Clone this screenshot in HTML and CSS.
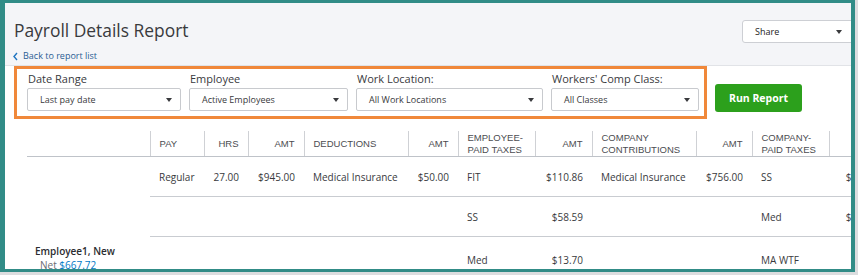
FILE: index.html
```html
<!DOCTYPE html>
<html lang="en">
<head>
<meta charset="utf-8">
<title>Payroll Details Report</title>
<link rel="stylesheet" href="styles.css">
</head>
<body>
<div class="frame">
  <div class="inner">
    <header class="page-head">
      <div class="title-row">
        <h1 class="title">Payroll Details Report</h1>
        <div class="share"><span>Share</span><span class="caret"></span></div>
      </div>
      <a class="back" href="#">
        <svg class="chev" width="5" height="9" viewBox="0 0 5 9"><path d="M4 1 L1 4.5 L4 8" fill="none" stroke="#1f74c0" stroke-width="1.4"/></svg>
        <span>Back to report list</span>
      </a>
    </header>
    <section class="content">
      <div class="filters-row">
        <div class="filters">
          <div class="field w1"><label class="lbl">Date Range</label><div class="select"><span>Last pay date</span><span class="caret"></span></div></div>
          <div class="field w2"><label class="lbl">Employee</label><div class="select"><span>Active Employees</span><span class="caret"></span></div></div>
          <div class="field w3"><label class="lbl">Work Location:</label><div class="select"><span>All Work Locations</span><span class="caret"></span></div></div>
          <div class="field w4"><label class="lbl">Workers' Comp Class:</label><div class="select"><span>All Classes</span><span class="caret"></span></div></div>
        </div>
        <button class="run">Run Report</button>
      </div>
      <table class="report">
        <colgroup>
          <col class="c-name"><col class="c-pay"><col class="c-hrs"><col class="c-amt1"><col class="c-ded"><col class="c-amt2"><col class="c-ept"><col class="c-amt3"><col class="c-cc"><col class="c-amt4"><col class="c-cpt"><col class="c-amt5">
        </colgroup>
        <thead>
          <tr>
            <th class="first"></th>
            <th>PAY</th>
            <th class="num">HRS</th>
            <th class="num">AMT</th>
            <th>DEDUCTIONS</th>
            <th class="num">AMT</th>
            <th>EMPLOYEE-<br>PAID TAXES</th>
            <th class="num">AMT</th>
            <th>COMPANY<br>CONTRIBUTIONS</th>
            <th class="num">AMT</th>
            <th>COMPANY-<br>PAID TAXES</th>
            <th class="num">AMT</th>
          </tr>
        </thead>
        <tbody>
          <tr>
            <td class="first"></td>
            <td>Regular</td>
            <td class="num">27.00</td>
            <td class="num">$945.00</td>
            <td>Medical Insurance</td>
            <td class="num">$50.00</td>
            <td>FIT</td>
            <td class="num">$110.86</td>
            <td>Medical Insurance</td>
            <td class="num">$756.00</td>
            <td>SS</td>
            <td class="num">$58.59</td>
          </tr>
          <tr>
            <td class="first"></td>
            <td></td><td></td><td></td><td></td><td></td>
            <td>SS</td>
            <td class="num">$58.59</td>
            <td></td><td></td>
            <td>Med</td>
            <td class="num">$13.70</td>
          </tr>
          <tr>
            <td class="first emp">
              <div class="emp-name">Employee1, New</div>
              <div class="emp-net">Net <span class="link">$667.72</span></div>
            </td>
            <td></td><td></td><td></td><td></td><td></td>
            <td>Med</td>
            <td class="num">$13.70</td>
            <td></td><td></td>
            <td>MA WTF</td>
            <td class="num">$5.67</td>
          </tr>
        </tbody>
      </table>
    </section>
  </div>
</div>
</body>
</html>
```
FILE: styles.css
```css
html, body {
  margin: 0;
  padding: 0;
}
body {
  background: #dcdddf;
  font-family: "Open Sans", "Liberation Sans", sans-serif;
  color: #393a3d;
}
.frame {
  width: 855px;
  height: 272px;
  box-sizing: border-box;
  border-style: solid;
  border-color: #318c87;
  border-width: 3px 4px 3px 5px;
  overflow: hidden;
  background: #ffffff;
}
.inner {
  width: 846px;
  height: 266px;
  overflow: hidden;
}
.page-head {
  background: #f4f5f8;
  padding: 16px 0 3px 9px;
  border-bottom: 1px solid #e1e3e7;
}
.title-row {
  display: flex;
  align-items: flex-start;
}
.title {
  margin: 0;
  font-size: 17.4px;
  line-height: 22px;
  font-weight: 400;
  color: #393a3d;
}
.share {
  margin-left: auto;
  margin-top: 1px;
  margin-right: -9px;
  width: 118px;
  height: 23px;
  box-sizing: border-box;
  border: 1px solid #cdcfd4;
  border-radius: 3px;
  background: #ffffff;
  display: flex;
  align-items: center;
  justify-content: space-between;
  padding: 0 17px 0 12px;
  font-size: 9px;
  color: #222;
}
.caret {
  width: 0;
  height: 0;
  border-left: 3.5px solid transparent;
  border-right: 3.5px solid transparent;
  border-top: 4px solid #393a3d;
}
.back {
  margin-top: 7px;
  display: flex;
  align-items: center;
  gap: 5px;
  font-size: 9px;
  line-height: 12px;
  color: #2a5d94;
  text-decoration: none;
  margin-left: -1px;
}
.chev {
  display: block;
}
.content {
  background: #ffffff;
}
.filters-row {
  display: flex;
  align-items: flex-start;
  gap: 8px;
  padding-left: 9px;
}
.filters {
  display: flex;
  gap: 8px;
  border: 3px solid #f0883a;
  padding: 3px 5px 5px 10px;
  background: #ffffff;
}
.field {
  display: flex;
  flex-direction: column;
}
.w1 { width: 154px; }
.w2 { width: 159px; }
.w3 { width: 187px; }
.w4 { width: 148px; }
.lbl {
  font-size: 11px;
  line-height: 14px;
  margin-bottom: 2px;
  padding-left: 1px;
  color: #393a3d;
}
.select {
  height: 23px;
  box-sizing: border-box;
  border: 1px solid #c8cace;
  border-radius: 2px;
  display: flex;
  align-items: center;
  justify-content: space-between;
  padding: 0 8px 0 12px;
  font-size: 9px;
  color: #393a3d;
  background: #ffffff;
}
.run {
  margin-top: 18px;
  width: 87px;
  height: 28px;
  border: none;
  border-radius: 3px;
  background: #2ca01c;
  color: #ffffff;
  font-family: "Open Sans", "Liberation Sans", sans-serif;
  font-weight: 700;
  font-size: 10.5px;
  padding: 0;
}
.report {
  margin-top: 12px;
  margin-left: 22px;
  border-collapse: collapse;
  table-layout: fixed;
  width: 859px;
}
.c-name { width: 123px; }
.c-pay { width: 54px; }
.c-hrs { width: 44px; }
.c-amt1 { width: 56px; }
.c-ded { width: 104px; }
.c-amt2 { width: 50px; }
.c-ept { width: 77px; }
.c-amt3 { width: 57px; }
.c-cc { width: 104px; }
.c-amt4 { width: 56px; }
.c-cpt { width: 77px; }
.c-amt5 { width: 57px; }
.report th {
  height: 25px;
  padding: 0 8px 0 9px;
  text-align: left;
  font-family: "Liberation Sans", Arial, sans-serif;
  font-weight: 400;
  font-size: 9.5px;
  line-height: 11.5px;
  color: #4b4c51;
  border-left: 1px solid #cfd1d5;
  border-bottom: 1px solid #bfc3c9;
  vertical-align: middle;
  white-space: nowrap;
}
.report th.first {
  border-left: none;
}
.report td {
  height: 39px;
  padding: 0 8px 0 9px;
  font-size: 10px;
  line-height: 14px;
  color: #393a3d;
  border-bottom: 1px solid #c9ccd1;
  vertical-align: middle;
  white-space: nowrap;
}
.report td.first {
  border-bottom: none;
}
.report .num {
  text-align: right;
  padding-right: 9px;
}
.report td.emp {
  vertical-align: top;
  padding: 7px 0 0 8px;
}
.emp-name {
  font-weight: 600;
  font-size: 10px;
  line-height: 14px;
  color: #2b2c2f;
}
.emp-net {
  padding-left: 5px;
  font-size: 10px;
  line-height: 15px;
  color: #6b6c72;
}
.link {
  color: #0077c5;
}
```
